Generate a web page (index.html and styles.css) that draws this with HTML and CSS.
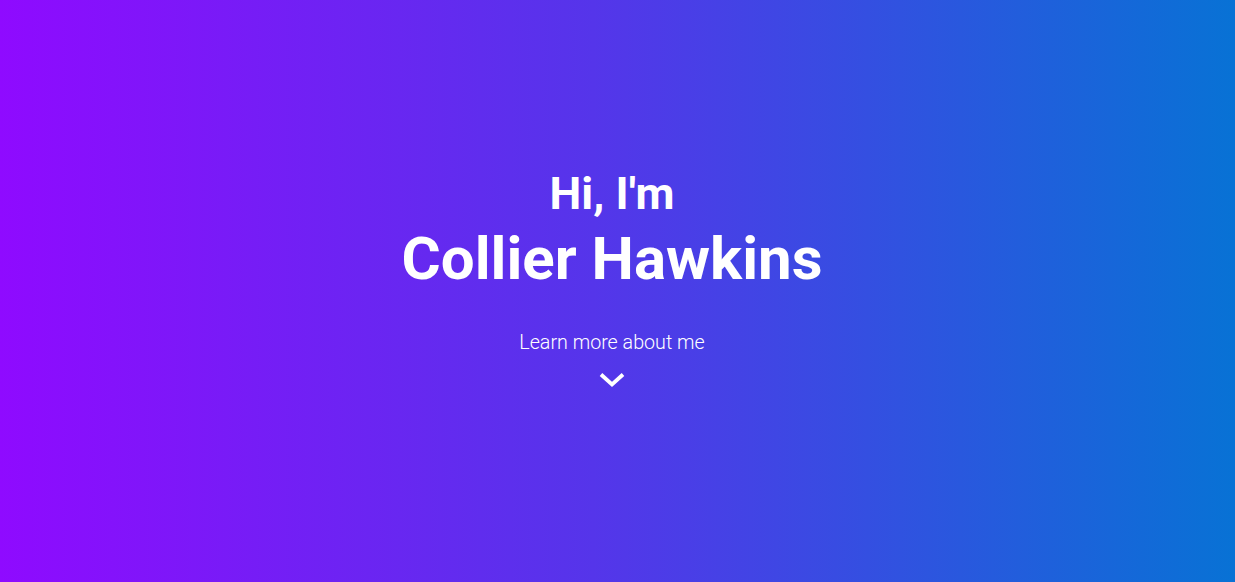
FILE: index.html
```html
<!DOCTYPE html>
<html>
<head>
<meta charset="utf-8">
<link rel="stylesheet" href="styles.css">
</head>
<body>
<section class="hero">
  <div class="intro">
    <h2 class="greeting">Hi, I'm</h2>
    <h1 class="name">Collier Hawkins</h1>
    <a class="more" href="#about">
      <span class="more-text">Learn more about me</span>
      <svg class="chevron" width="26" height="16" viewBox="0 0 26 16"><path d="M2 2.5 L13 12.5 L24 2.5" fill="none" stroke="#fff" stroke-width="3.8"/></svg>
    </a>
  </div>
</section>
</body>
</html>
```
FILE: styles.css
```css
html, body { margin: 0; padding: 0; }
body { font-family: Roboto, "Liberation Sans", sans-serif; color: #fff; }
.hero {
  height: 582px;
  box-sizing: border-box;
  padding-right: 11px;
  background: linear-gradient(to right, #8f0aff 0%, #5535ea 48%, #0872d5 100%);
  display: flex;
  align-items: center;
  justify-content: center;
}
.intro {
  display: flex;
  flex-direction: column;
  align-items: center;
  margin-top: -28px;
}
.greeting {
  margin: 0;
  font-size: 45px;
  font-weight: 700;
  line-height: 54px;
}
.name {
  margin: 2px 0 0;
  font-size: 60px;
  font-weight: 700;
  line-height: 72px;
}
.more {
  margin-top: 36px;
  display: flex;
  flex-direction: column;
  align-items: center;
  color: #fff;
  text-decoration: none;
}
.more-text {
  font-size: 19.7px;
  font-weight: 300;
  line-height: 24px;
}
.chevron { margin-top: 17px; display: block; }
```
